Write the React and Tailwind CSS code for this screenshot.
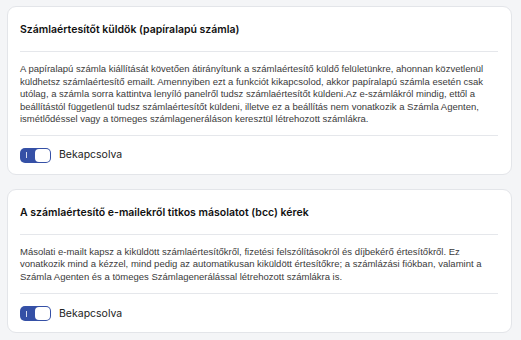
export default function App() {
  return (
    <div className="min-h-screen bg-[#f4f5f7] pl-[7px] pr-[9px] pt-[6px] pb-2 font-['Inter',sans-serif]">
      <div className="flex flex-col gap-[14px]">
        <section className="rounded-[9px] border border-[#e3e5e9] bg-white px-3 pb-[11px]">
          <h2 className="pt-[16px] pb-[14px] text-[10.5px] font-semibold leading-[14px] text-[#111]">
            Számlaértesítőt küldök (papíralapú számla)
          </h2>
          <div className="border-t border-[#e5e7eb] mr-[1px]" />
          <p className="pt-[11px] pb-[9px] font-['Liberation_Sans',Arial,sans-serif] text-[9.5px] leading-[12.5px] text-[#3a3a3a]">
            A papíralapú számla kiállítását követően átirányítunk a számlaértesítő küldő felületünkre, ahonnan közvetlenül küldhetsz számlaértesítő emailt. Amennyiben ezt a funkciót kikapcsolod, akkor papíralapú számla esetén csak utólag, a számla sorra kattintva lenyíló panelről tudsz számlaértesítőt küldeni.Az e-számlákról mindig, ettől a beállítástól függetlenül tudsz számlaértesítőt küldeni, illetve ez a beállítás nem vonatkozik a Számla Agenten, ismétlődéssel vagy a tömeges számlageneráláson keresztül létrehozott számlákra.
          </p>
          <div className="border-t border-[#e5e7eb] mr-[1px]" />
          <Toggle />
        </section>
        <section className="rounded-[9px] border border-[#e3e5e9] bg-white px-3 pb-[11px]">
          <h2 className="pt-[16px] pb-[14px] text-[10.5px] font-semibold leading-[14px] text-[#111]">
            A számlaértesítő e-mailekről titkos másolatot (bcc) kérek
          </h2>
          <div className="border-t border-[#e5e7eb] mr-[1px]" />
          <p className="pt-[11px] pb-[10px] font-['Liberation_Sans',Arial,sans-serif] text-[9.5px] leading-[12.5px] text-[#3a3a3a]">
            Másolati e-mailt kapsz a kiküldött számlaértesítőkről, fizetési felszólításokról és díjbekérő értesítőkről. Ez vonatkozik mind a kézzel, mind pedig az automatikusan kiküldött értesítőkre; a számlázási fiókban, valamint a Számla Agenten és a tömeges Számlagenerálással létrehozott számlákra is.
          </p>
          <div className="border-t border-[#e5e7eb] mr-[1px]" />
          <Toggle />
        </section>
      </div>
    </div>
  );
}

function Toggle() {
  return (
    <label className="flex items-center gap-[8px] pt-[12px]">
      <span className="flex h-[15px] w-[31px] items-center justify-between rounded-[5px] bg-[#3550a6] pl-[6px] pr-[1px]">
        <span className="h-[6px] w-[1px] bg-white/80" />
        <span className="h-[13px] w-[15px] rounded-[4px] bg-white" />
      </span>
      <span className="text-[10.5px] leading-[14px] text-[#222]">Bekapcsolva</span>
    </label>
  );
}
